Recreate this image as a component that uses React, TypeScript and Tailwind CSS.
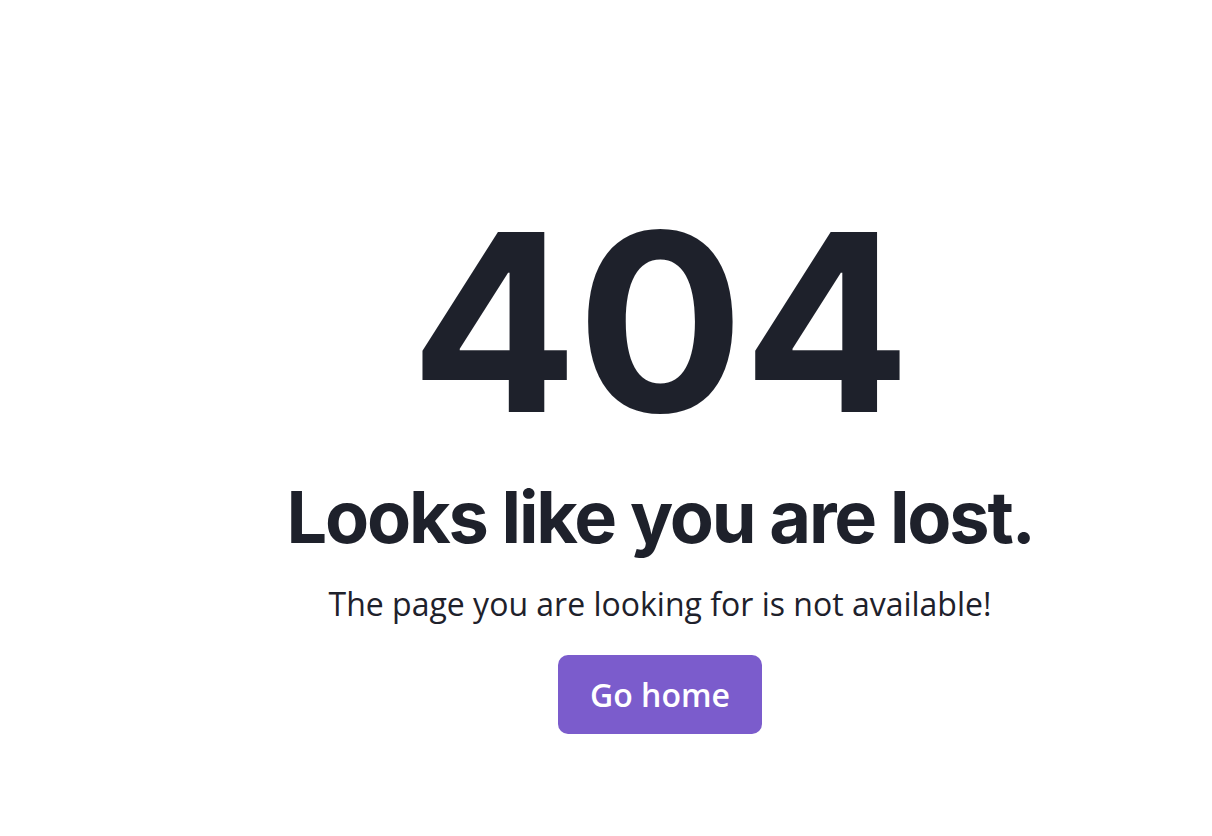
export default function App() {
  return (
    <div className="flex min-h-[836px] w-full justify-center bg-white pl-[108px] text-[#1e212b]">
      <div className="flex flex-col items-center pt-[198px]">
        <h1 className="font-['Inter',sans-serif] text-[248px] font-bold leading-[248px] tracking-[-0.004em]">404</h1>
        <h2 className="mt-[31px] font-['Inter',sans-serif] text-[72px] font-bold leading-[80px] tracking-[-0.03em]">
          Looks like you are lost.
        </h2>
        <p className="mt-[25px] font-['Open_Sans',sans-serif] text-[32px] leading-[44px]">
          The page you are looking for is not available!
        </p>
        <a
          href="#"
          className="mt-[29px] flex h-[79px] w-[204px] items-center justify-center rounded-[10px] bg-[#7b5ccc] font-['Open_Sans',sans-serif] text-[32px] font-semibold text-white"
        >
          Go home
        </a>
      </div>
    </div>
  )
}
